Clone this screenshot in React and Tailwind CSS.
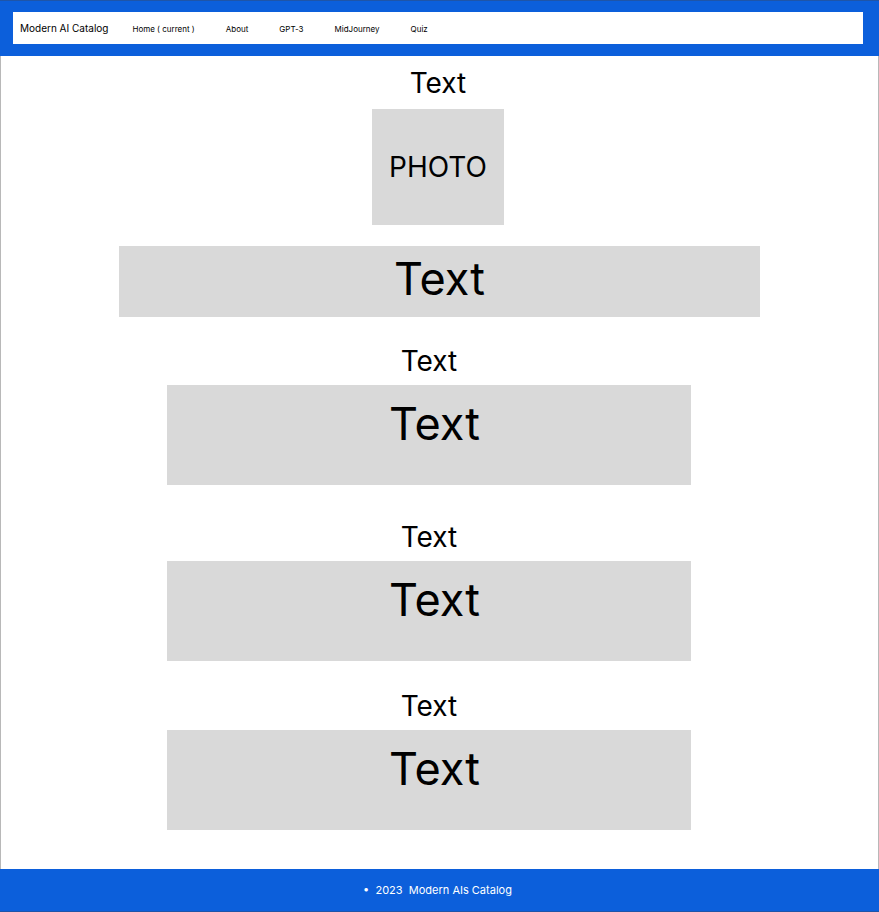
const links = [
  { label: 'About', href: '#about' },
  { label: 'GPT-3', href: '#gpt-3' },
  { label: 'MidJourney', href: '#midjourney' },
  { label: 'Quiz', href: '#quiz' },
];

function Heading({ children }) {
  return <h2 className="text-center text-[28px] leading-8">{children}</h2>;
}

function Section({ title, text, className }) {
  return (
    <section className={className}>
      <Heading>{title}</Heading>
      <div className="mt-2 h-[100px] bg-[#d9d9d9] pt-2 pl-[11px]">
        <p className="text-center text-[45px] leading-[62px]">{text}</p>
      </div>
    </section>
  );
}

export default function App() {
  return (
    <div className="flex min-h-screen flex-col bg-white font-['Inter',sans-serif] text-black">
      <header className="border-t border-[#1f55a8] bg-[#0c5fdb] pt-[11px] pr-4 pb-3 pl-[13px]">
        <nav className="flex h-8 items-center bg-white pl-[7px]">
          <a href="#top" className="mr-6 text-[10px] whitespace-pre">Modern AI Catalog</a>
          <div className="flex gap-[31px] pt-px text-[8px]">
            <a href="#home" aria-current="page" className="whitespace-pre">Home ( current )</a>
            {links.map((link) => (
              <a key={link.label} href={link.href}>{link.label}</a>
            ))}
          </div>
        </nav>
      </header>

      <main className="flex-1 border-x border-[#b8b8b8] pt-[11px] pb-[38px]">
        <div className="pr-[3px]">
          <Heading>Text</Heading>
          <div className="mx-auto mt-[10px] flex h-[116px] w-[132px] items-center justify-center bg-[#d9d9d9] text-[28px]">
            PHOTO
          </div>
        </div>
        <div className="mx-auto mt-[21px] h-[71px] w-[73%] bg-[#d9d9d9] text-center text-[45px] leading-[66px]">
          Text
        </div>
        <div className="pr-[21px]">
          <div className="mx-auto w-full max-w-[524px]">
            <Section className="mt-7" title="Text" text="Text" />
            <Section className="mt-9" title="Text" text="Text" />
            <Section className="mt-[29px]" title="Text" text="Text" />
          </div>
        </div>
      </main>

      <footer className="flex h-[43px] items-center justify-center border-b border-[#1f55a8] bg-[#0c5fdb] pr-1 text-[11px] text-white">
        <p className="whitespace-pre">•  2023  Modern AIs Catalog</p>
      </footer>
    </div>
  );
}
